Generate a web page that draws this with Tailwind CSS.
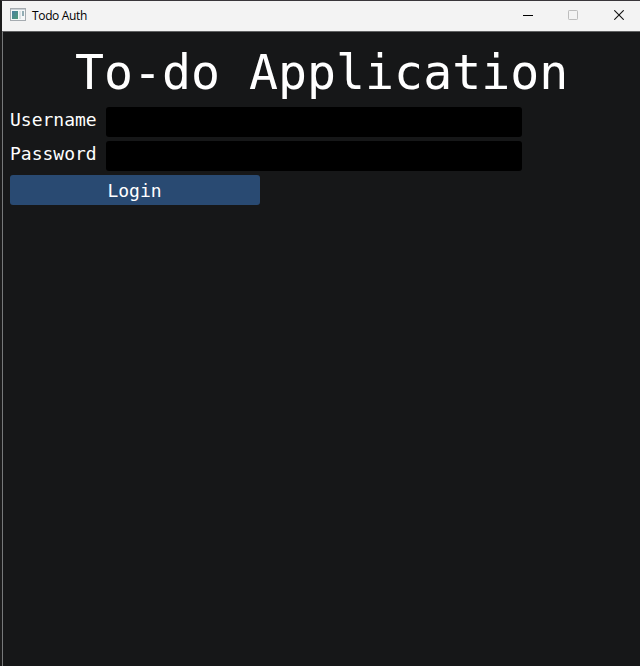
<!DOCTYPE html>
<html lang="en">
<head>
<meta charset="utf-8">
<title>Todo Auth</title>
<script src="https://cdn.jsdelivr.net/npm/@tailwindcss/browser@4"></script>
</head>
<body class="h-screen overflow-hidden bg-[#161718]">
<div class="flex h-[666px] w-[640px] flex-col border-l-2 border-t border-l-[#1b1b1b] border-t-[#39363a]">
  <header class="flex h-[30px] shrink-0 items-center bg-[#f3f3f3] pl-2 text-black">
    <svg class="mb-0.5 h-[14px] w-4" viewBox="0 0 16 14" fill="none">
      <defs><linearGradient id="g" x1="0" y1="0" x2="1" y2="1"><stop stop-color="#4a7fa0"/><stop offset="1" stop-color="#4f9a78"/></linearGradient></defs>
      <rect x=".5" y=".5" width="15" height="12" fill="#f5f7f8" stroke="#a5abb0"/>
      <path d="M1 1.5h14" stroke="#c9d0d5"/>
      <rect x="2" y="3" width="6" height="8" fill="url(#g)"/>
      <rect x="9" y="3" width="2" height="8" fill="#dce3e6"/>
      <rect x="12" y="3" width="2" height="5" fill="#92adb4"/>
    </svg>
    <h1 class="ml-1.5 font-['Open_Sans',sans-serif] text-[12px] leading-4 tracking-[-0.35px]">Todo Auth</h1>
    <div class="ml-auto mr-px flex h-full items-center pb-0.5">
      <div class="flex w-[45px] justify-center"><svg class="h-[10px] w-[10px]" viewBox="0 0 10 10"><path d="M0 5.5h10" stroke="#000"/></svg></div>
      <div class="flex w-[45px] justify-center"><svg class="h-[10px] w-[10px]" viewBox="0 0 10 10" fill="none"><rect x=".5" y=".5" width="9" height="9" rx=".7" stroke="#bdbdbd"/></svg></div>
      <div class="flex w-[44px] justify-center pl-1"><svg class="h-[10px] w-[10px]" viewBox="0 0 10 10"><path d="M.3.3l9.4 9.4M9.7.3L.3 9.7" stroke="#111" stroke-width="1.1"/></svg></div>
    </div>
  </header>
  <main class="flex grow flex-col border-l border-t border-l-[#77797a] border-t-[#606162] pl-[7px] font-['DejaVu_Sans_Mono',monospace] text-[18px] text-white">
    <h2 class="ml-[65px] h-[75px] whitespace-pre pt-[9px] text-[48.2px] leading-[62px]">To-do Application</h2>
    <div class="flex h-[30px]">
      <label class="w-24 leading-[25px]" for="u">Username</label>
      <input id="u" class="w-[416px] rounded-[3px] bg-black">
    </div>
    <div class="mt-1 flex h-[30px]">
      <label class="w-24 leading-[25px]" for="p">Password</label>
      <input id="p" type="password" class="w-[416px] rounded-[3px] bg-black">
    </div>
    <button class="mt-1 h-[30px] w-[250px] rounded-[3px] bg-[#294a72] pr-px pt-px leading-[30px]">Login</button>
  </main>
</div>
</body>
</html>
